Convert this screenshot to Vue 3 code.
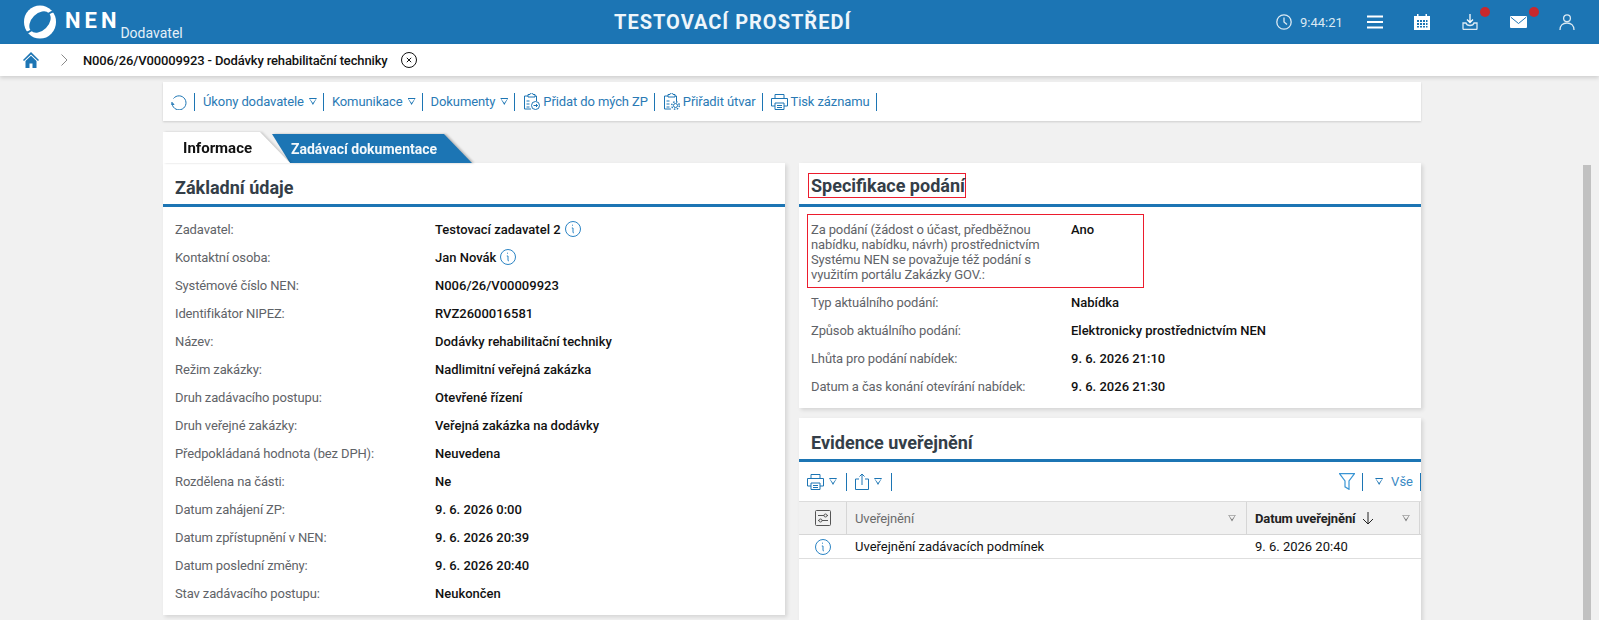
<script setup>
const mainRows = [
  { label: 'Zadavatel:', value: 'Testovací zadavatel 2', info: true },
  { label: 'Kontaktní osoba:', value: 'Jan Novák', info: true },
  { label: 'Systémové číslo NEN:', value: 'N006/26/V00009923' },
  { label: 'Identifikátor NIPEZ:', value: 'RVZ2600016581' },
  { label: 'Název:', value: 'Dodávky rehabilitační techniky' },
  { label: 'Režim zakázky:', value: 'Nadlimitní veřejná zakázka' },
  { label: 'Druh zadávacího postupu:', value: 'Otevřené řízení' },
  { label: 'Druh veřejné zakázky:', value: 'Veřejná zakázka na dodávky' },
  { label: 'Předpokládaná hodnota (bez DPH):', value: 'Neuvedena' },
  { label: 'Rozdělena na části:', value: 'Ne' },
  { label: 'Datum zahájení ZP:', value: '9. 6. 2026 0:00' },
  { label: 'Datum zpřístupnění v NEN:', value: '9. 6. 2026 20:39' },
  { label: 'Datum poslední změny:', value: '9. 6. 2026 20:40' },
  { label: 'Stav zadávacího postupu:', value: 'Neukončen' },
]

const specRows = [
  { label: 'Typ aktuálního podání:', value: 'Nabídka' },
  { label: 'Způsob aktuálního podání:', value: 'Elektronicky prostřednictvím NEN' },
  { label: 'Lhůta pro podání nabídek:', value: '9. 6. 2026 21:10' },
  { label: 'Datum a čas konání otevírání nabídek:', value: '9. 6. 2026 21:30' },
]
</script>

<template>
  <div class="app">
    <header class="topbar">
      <div class="brand">
        <svg class="logo" viewBox="0 0 32 34" width="32" height="34">
          <ellipse cx="16" cy="17" rx="16" ry="16.500" fill="#fff" />
          <ellipse cx="16" cy="17" rx="12.500" ry="8.500" fill="#1c75b4" transform="rotate(-45 16 17)" />
          <path fill="none" stroke="#1c75b4" stroke-width="2" d="M24 9c2-1.500 4-2.500 7-3M8 25c-2 1.500-4 2.500-7 3" />
        </svg>
        <span class="nen">NEN</span>
        <span class="role">Dodavatel</span>
      </div>
      <div class="env">TESTOVACÍ PROSTŘEDÍ</div>
      <div class="top-tools">
        <svg class="clock" viewBox="0 0 16 16" width="16" height="16" fill="none" stroke="#dbe9f3" stroke-width="1.300">
          <circle cx="8" cy="8" r="7.200" />
          <path d="M8 3.500V8l3 2.600" />
        </svg>
        <span class="time">9:44:21</span>
        <svg class="menu" viewBox="0 0 16 14" width="16" height="14" fill="none" stroke="#fff" stroke-width="2">
          <path d="M0 1.500h16M0 7h16M0 12.500h16" />
        </svg>
        <svg class="cal" viewBox="0 0 16 16" width="16" height="16">
          <path fill="#fff" d="M0 2h3V0h1.500v2h7V0H13v2h3v14H0z" />
          <path fill="#1c75b4" d="M3 6h2v2H3zM6 6h2v2H6zM9 6h2v2H9zM12 6h1.500v2H12zM3 9h2v2H3zM6 9h2v2H6zM9 9h2v2H9zM12 9h1.500v2H12zM3 12h2v1.500H3zM6 12h2v1.500H6zM9 12h2v1.500H9zM12 12h1.500v1.500H12z" />
        </svg>
        <span class="dotted dl">
          <svg viewBox="0 0 16 16" width="16" height="16" fill="none" stroke="#dbe9f3" stroke-width="1.300">
            <path d="M8 0v8M5 5.500 8 8.500l3-3" stroke="#fff" />
            <path d="M4 9H1v5.500A1 1 0 0 0 2 15.500h12a1 1 0 0 0 1-1V9h-3c-.5 2-2 2.500-4 2.500S4.500 11 4 9z" />
          </svg>
          <i class="dot"></i>
        </span>
        <span class="dotted mail">
          <svg viewBox="0 0 17 12" width="17" height="12">
            <path fill="#fff" d="M1 0h15a1 1 0 0 1 1 1v10a1 1 0 0 1-1 1H1a1 1 0 0 1-1-1V1a1 1 0 0 1 1-1z" />
            <path fill="none" stroke="#1c75b4" d="M.8 1.200 8.500 7.500l7.700-6.300" />
          </svg>
          <i class="dot"></i>
        </span>
        <svg class="user" viewBox="0 0 16 16" width="16" height="16" fill="none" stroke="#dbe9f3" stroke-width="1.300">
          <circle cx="8" cy="4.200" r="3.400" />
          <path d="M1 16c0-4.500 3-7 7-7s7 2.500 7 7" />
        </svg>
      </div>
    </header>

    <nav class="crumbs">
      <svg class="home" viewBox="0 0 16 16" width="16" height="16">
        <path fill="#1c75b4" d="M8 0 0 8l1 1 7-6.600L15 9l1-1z" />
        <path fill="#1c75b4" d="M2.500 9 8 3.800 13.500 9v7H9.500v-4.500h-3V16h-4z" />
      </svg>
      <svg class="chev" viewBox="0 0 7 12" width="7" height="12" fill="none" stroke="#8a8a8a">
        <path d="m.5.500 5.500 5.500-5.500 5.500" />
      </svg>
      <span class="crumb">N006/26/V00009923 - Dodávky rehabilitační techniky</span>
      <svg class="close" viewBox="0 0 16 16" width="16" height="16" fill="none" stroke="#111">
        <circle cx="8" cy="8" r="7.500" />
        <path d="m5.800 5.800 4.400 4.400m0-4.400-4.400 4.400" />
      </svg>
    </nav>

    <main class="page">
      <div class="toolbar">
        <button class="tool first">
          <svg viewBox="0 0 16 16" width="16" height="16" fill="none" stroke="#1c75b4">
            <path d="M2.500 4.500A7 7 0 1 1 1 8.500" />
            <path d="M.5 8 3 10.500 0 10" />
          </svg>
        </button>
        <button class="tool">Úkony dodavatele <i class="caret"></i></button>
        <button class="tool">Komunikace <i class="caret"></i></button>
        <button class="tool">Dokumenty <i class="caret"></i></button>
        <button class="tool">
          <svg viewBox="0 0 17 17" width="17" height="17" fill="none" stroke="#1c75b4">
            <path d="M5 3H1.500v13H8M12 3H13.500v5M5 3V1.500h2a1.500 1.500 0 0 1 3 0h2V4H5zM3.500 8h3M3.500 11h3M3.500 14h3" />
            <circle cx="12.500" cy="12.500" r="4" />
            <path d="M10.500 12.500h4M13 11l1.500 1.500L13 14" />
          </svg>
          Přidat do mých ZP
        </button>
        <button class="tool">
          <svg viewBox="0 0 17 17" width="17" height="17" fill="none" stroke="#1c75b4">
            <path d="M5 3H1.500v13H8M12 3H13.500v5M5 3V1.500h2a1.500 1.500 0 0 1 3 0h2V4H5zM3.500 8h3M3.500 11h3M3.500 14h3" />
            <circle cx="12.500" cy="12.500" r="2" />
            <circle cx="12.500" cy="12.500" r="3.800" stroke-width="1.400" stroke-dasharray="1.500 1.500" />
          </svg>
          Přiřadit útvar
        </button>
        <button class="tool">
          <svg viewBox="0 0 17 16" width="17" height="16" fill="none" stroke="#1c75b4">
            <path d="M4 4V.5h9V4M4 12H.5V4.500h16V12H13" />
            <path d="M4 9h9v6.500H4zM6 11.500h5M6 13.500h5" />
          </svg>
          Tisk záznamu
        </button>
      </div>

      <div class="tabs">
        <div class="tab-wrap active"><div class="tab">Informace</div></div>
        <div class="tab-wrap other"><div class="tab">Zadávací dokumentace</div></div>
      </div>

      <div class="columns">
        <section class="card main-card">
          <h2 class="card-title"><span class="plain">Základní údaje</span></h2>
          <div class="rows">
            <div v-for="row in mainRows" :key="row.label" class="row">
              <span class="label">{{ row.label }}</span>
              <span class="value">
                {{ row.value }}
                <svg v-if="row.info" class="info" viewBox="0 0 16 16" width="16" height="16" fill="none" stroke="#2b84c4">
                  <circle cx="8" cy="8" r="7.500" />
                  <path d="M7 4.200h1M6.800 7H8v4.200c0 .6.400.8 1 .6" />
                </svg>
              </span>
            </div>
          </div>
        </section>

        <div class="side">
          <section class="card spec-card">
            <h2 class="card-title"><span class="marked">Specifikace podání</span></h2>
            <div class="row-marked">
              <span class="label multi">Za podání (žádost o účast, předběžnou nabídku, nabídku, návrh) prostřednictvím Systému NEN se považuje též podání s využitím portálu Zakázky GOV.:</span>
              <span class="value">Ano</span>
            </div>
            <div class="rows spec-rows">
              <div v-for="row in specRows" :key="row.label" class="row">
                <span class="label">{{ row.label }}</span>
                <span class="value">{{ row.value }}</span>
              </div>
            </div>
          </section>

          <section class="card pub-card">
            <h2 class="card-title"><span class="plain">Evidence uveřejnění</span></h2>
            <div class="grid-tools">
              <button class="gtool">
                <svg viewBox="0 0 17 16" width="17" height="16" fill="none" stroke="#1c75b4">
                  <path d="M4 4V.5h9V4M4 12H.5V4.500h16V12H13" />
                  <path d="M4 9h9v6.500H4zM6 11.500h5M6 13.500h5" />
                </svg>
                <i class="caret"></i>
              </button>
              <button class="gtool">
                <svg viewBox="0 0 14 17" width="14" height="17" fill="none" stroke="#1c75b4">
                  <path d="M4 6H.5v10.500h13V6H10M7 12V1M4.500 3.500 7 1l2.500 2.500" />
                </svg>
                <i class="caret"></i>
              </button>
              <button class="gtool funnel">
                <svg viewBox="0 0 16 17" width="16" height="17" fill="none" stroke="#3a95d4" stroke-width="1.200">
                  <path d="M.5.700h15L10 8v8.300l-4-2.500V8z" />
                </svg>
              </button>
              <button class="gtool all"><i class="caret"></i> Vše</button>
            </div>
            <div class="table">
              <div class="thead">
                <div class="cell c-icon">
                  <svg viewBox="0 0 16 16" width="16" height="16" fill="none" stroke="#555">
                    <rect x=".5" y=".5" width="15" height="15" rx="1" />
                    <path d="M3 5.500h6M12 5.500h1M3 10.500h1M7 10.500h6" />
                    <circle cx="10.500" cy="5.500" r="1.500" />
                    <circle cx="5.500" cy="10.500" r="1.500" />
                  </svg>
                </div>
                <div class="cell c-name">Uveřejnění <i class="caret gray"></i></div>
                <div class="cell c-date">
                  <b>Datum uveřejnění</b>
                  <svg class="arrow" viewBox="0 0 12 13" width="12" height="13" fill="none" stroke="#222">
                    <path d="M6 0v12M1 7l5 5 5-5" />
                  </svg>
                  <i class="caret gray"></i>
                </div>
              </div>
              <div class="tbody-row">
                <div class="cell c-icon">
                  <svg viewBox="0 0 16 16" width="16" height="16" fill="none" stroke="#2b84c4">
                    <circle cx="8" cy="8" r="7.500" />
                    <path d="M7 4.200h1M6.800 7H8v4.200c0 .6.400.8 1 .6" />
                  </svg>
                </div>
                <div class="cell c-name">Uveřejnění zadávacích podmínek</div>
                <div class="cell c-date">9. 6. 2026 20:40</div>
              </div>
            </div>
          </section>
        </div>
      </div>
    </main>

    <div class="scrollbar"></div>
  </div>
</template>

<style>
html, body {
  margin: 0;
  height: 620px;
  overflow: hidden;
  background: #f1f1f1;
}
</style>

<style scoped>
.app {
  position: relative;
  height: 620px;
  overflow: hidden;
  background: #f1f1f1;
  font-family: Roboto, "Liberation Sans", sans-serif;
  font-size: 13px;
  color: #111;
}

.topbar {
  display: flex;
  align-items: center;
  height: 44px;
  background: #1c75b4;
  color: #fff;
}

.brand {
  display: flex;
  align-items: flex-start;
  width: 614px;
  height: 44px;
  padding-left: 24px;
  box-sizing: border-box;
}

.logo {
  margin-top: 5px;
}

.nen {
  margin: 8px 0 0 9px;
  font-size: 22px;
  font-weight: 700;
  line-height: 26px;
  letter-spacing: 4px;
}

.role {
  margin: 25px 0 0 0;
  font-size: 14px;
  line-height: 16px;
  color: #e4f0f8;
}

.env {
  width: 237px;
  font-size: 20px;
  font-weight: 700;
  letter-spacing: 1px;
  white-space: nowrap;
  text-align: center;
  color: #eef6fb;
}

.top-tools {
  display: flex;
  align-items: center;
  margin-left: 425px;
}

.time {
  margin-left: 8px;
  font-size: 13px;
  color: #dbe9f3;
}

.menu { margin-left: 24px; }
.cal { margin-left: 31px; }
.dotted { position: relative; display: flex; }
.dl { margin-left: 32px; }
.mail { margin-left: 32px; }
.user { margin-left: 32px; }

.dot {
  position: absolute;
  top: -9px;
  right: -12px;
  width: 10px;
  height: 10px;
  border-radius: 50%;
  background: #c9282d;
}

.dl .dot { top: -7px; }

.crumbs {
  display: flex;
  align-items: center;
  height: 32px;
  padding-left: 23px;
  background: #fff;
  box-shadow: 0 2px 4px rgba(0, 0, 0, 0.14);
  position: relative;
}

.chev { margin-left: 22px; }

.crumb {
  margin-left: 15px;
  font-weight: 500;
  letter-spacing: -0.14px;
  white-space: nowrap;
}

.close { margin-left: 13px; }

.page {
  width: 1258px;
  margin-left: 163px;
  padding-top: 6px;
}

.toolbar {
  display: flex;
  align-items: center;
  height: 39px;
  padding-left: 8px;
  background: #fff;
  box-shadow: 0 1px 2px rgba(0, 0, 0, 0.15);
}

.tool,
.gtool {
  display: flex;
  align-items: center;
  border: 0;
  background: none;
  padding: 0;
  font: inherit;
  color: #2a7ab5;
  white-space: nowrap;
}

.tool {
  height: 18px;
  gap: 3px;
  padding: 0 6px 0 8px;
  border-right: 1px solid #1c75b4;
  letter-spacing: -0.1px;
}

.first { padding: 0 7px 0 0; }

.tool .caret { margin-left: 2px; }

.caret {
  display: inline-block;
  width: 8px;
  height: 7px;
  background: #1c75b4;
  clip-path: polygon(0 0, 100% 0, 50% 100%, 0 0, 12% 1px, 50% calc(100% - 2px), 88% 1px, 12% 1px);
  margin-left: 1px;
}

.caret.gray { background: #777; }

.tabs {
  display: flex;
  align-items: flex-end;
  height: 31px;
  margin-top: 11px;
  position: relative;
}

.tab-wrap.active {
  position: relative;
  z-index: 1;
  filter: drop-shadow(2px 0 1px rgba(0, 0, 0, 0.16));
}

.tab-wrap.other {
  margin-left: -18px;
  filter: drop-shadow(2px 0 1px rgba(0, 0, 0, 0.25));
}

.tab {
  display: flex;
  align-items: center;
  box-sizing: border-box;
}

.active .tab {
  width: 127px;
  height: 31px;
  padding: 1px 0 0 20px;
  background: #fff;
  clip-path: polygon(0 0, 97px 0, 100% 100%, 0 100%);
  font-size: 15px;
  font-weight: 700;
}

.other .tab {
  width: 200px;
  height: 29px;
  padding-left: 19px;
  background: #1c75b4;
  clip-path: polygon(0 0, 172px 0, 100% 100%, 18px 100%);
  font-size: 14px;
  font-weight: 700;
  color: #f3f8fb;
  white-space: nowrap;
}

.columns {
  display: grid;
  grid-template-columns: 622px 622px;
  column-gap: 14px;
  align-items: start;
}

.card {
  background: #fff;
  box-shadow: 2px 2px 4px rgba(0, 0, 0, 0.12);
}

.main-card { height: 452px; }

.card-title {
  display: flex;
  align-items: center;
  height: 41px;
  margin: 0;
  padding-left: 12px;
  border-bottom: 3px solid #1c75b4;
  font-size: 18px;
  font-weight: 700;
  color: #343e48;
}

.plain {
  margin-top: 8px;
}

.marked {
  margin-left: -3px;
  margin-top: 4px;
  padding: 0 0 0 2px;
  line-height: 23px;
  border: 1px solid #ec1c2d;
}

.rows {
  padding-top: 8px;
}

.row {
  display: flex;
  align-items: center;
  height: 28px;
  padding-left: 12px;
}

.label {
  flex: none;
  width: 260px;
  color: #5f6368;
  letter-spacing: -0.13px;
}

.value {
  display: flex;
  align-items: center;
  gap: 4px;
  font-weight: 500;
  white-space: nowrap;
}

.row-marked {
  display: flex;
  box-sizing: border-box;
  width: 337px;
  height: 74px;
  margin: 7px 0 0 8px;
  padding: 7px 0 0 3px;
  border: 1px solid #ec1c2d;
}

.multi {
  width: 260px;
  line-height: 15px;
}

.row-marked .value {
  line-height: 15px;
  align-self: flex-start;
}

.spec-rows {
  padding: 0 0 8px;
}

.pub-card {
  margin-top: 10px;
  height: 210px;
}

.grid-tools {
  display: flex;
  align-items: center;
  height: 39px;
}

.gtool {
  gap: 4px;
  height: 18px;
  padding: 0 9px 0 8px;
  border-right: 1px solid #1c75b4;
}

.funnel { margin-left: auto; padding: 0 7px 0 0; }
.all { padding: 0 7px 0 11px; gap: 8px; color: #3a8ac4; }

.table {
  border-top: 1px solid #dcdcdc;
}

.thead,
.tbody-row {
  display: flex;
  align-items: stretch;
}

.thead {
  height: 32px;
  background: #f1f1f1;
  border-bottom: 1px solid #d6d6d6;
  color: #6b6b6b;
  letter-spacing: -0.13px;
}

.tbody-row {
  height: 23px;
  border-bottom: 1px solid #dedede;
}

.cell {
  display: flex;
  align-items: center;
  box-sizing: border-box;
}

.c-icon {
  flex: none;
  width: 48px;
  justify-content: center;
}

.c-name {
  flex: none;
  width: 400px;
  padding-left: 8px;
}

.c-date {
  flex: 1;
  padding-left: 8px;
}

.thead .c-icon,
.thead .c-name {
  border-right: 1px solid #d6d6d6;
}

.thead .c-name .caret {
  margin-left: auto;
  margin-right: 10px;
}

.thead .c-date {
  margin-right: 1px;
  border-right: 1px solid #d6d6d6;
}

.thead .c-date .caret {
  margin-left: auto;
  margin-right: 9px;
}

.thead b {
  font-weight: 700;
  color: #222;
}

.arrow { margin-left: 6px; }

.tbody-row .c-name,
.tbody-row .c-date {
  color: #111;
}

.scrollbar {
  position: absolute;
  top: 165px;
  left: 1583px;
  width: 8px;
  height: 455px;
  background: #c1c1c1;
}
</style>
